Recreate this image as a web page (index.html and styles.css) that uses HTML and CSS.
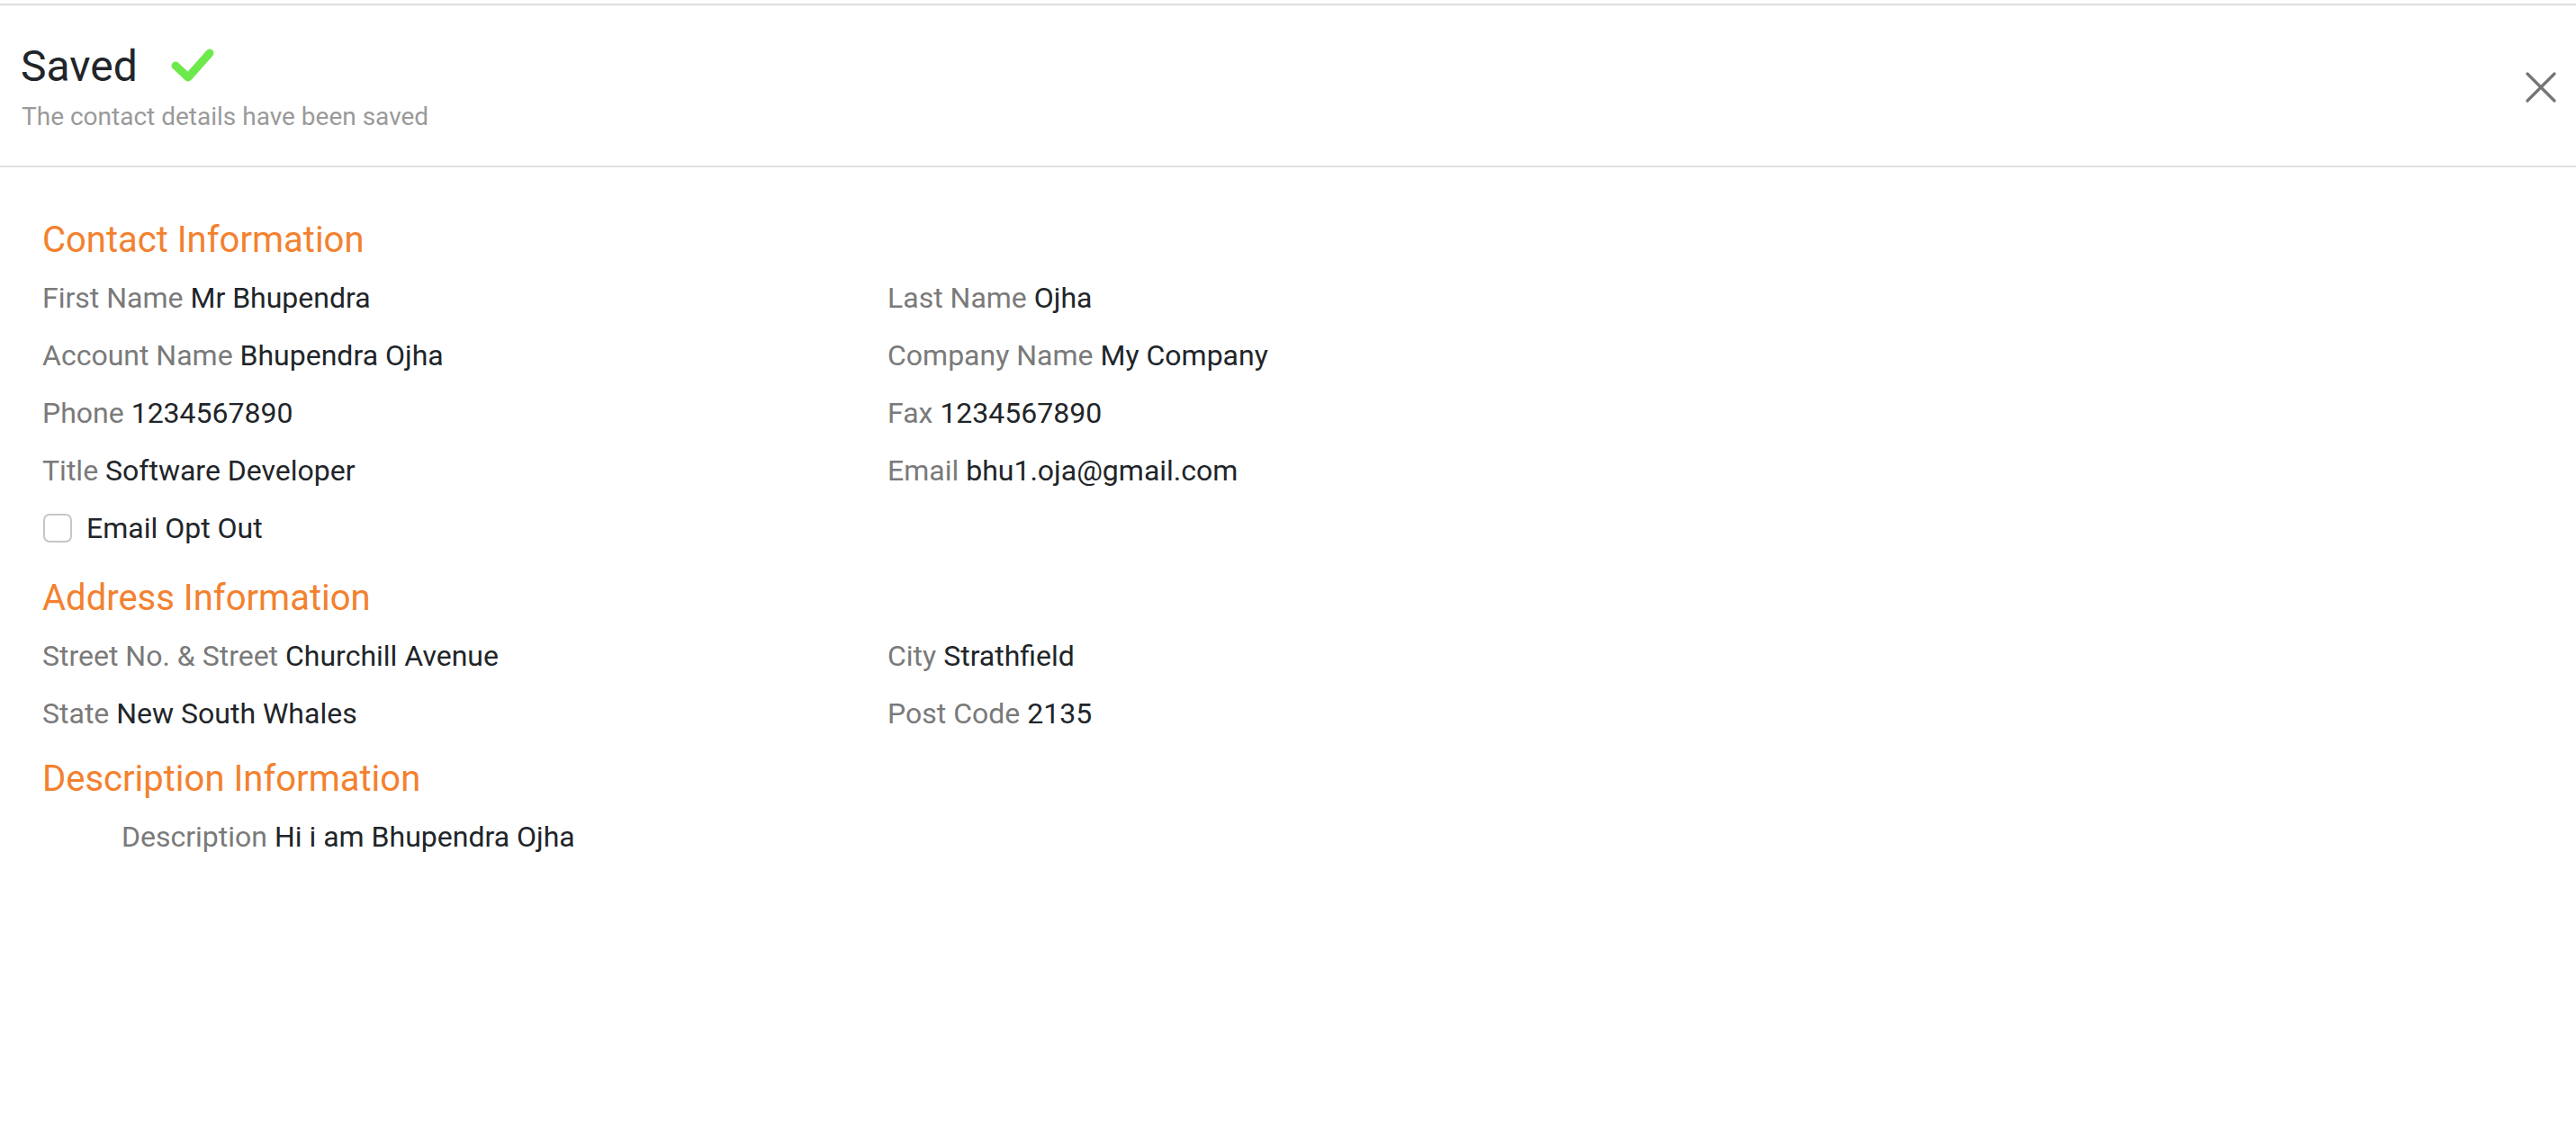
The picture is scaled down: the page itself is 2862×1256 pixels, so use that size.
FILE: index.html
```html
<!DOCTYPE html>
<html lang="en">
<head>
<meta charset="utf-8">
<title>Saved</title>
<link rel="stylesheet" href="styles.css">
</head>
<body>
<div class="page">
  <header class="modal-header">
    <div class="header-text">
      <div class="title-row">
        <h1 class="title">Saved</h1>
        <svg class="check" width="52" height="40" viewBox="0 0 52 40" aria-hidden="true">
          <path d="M7 20 L21 33 L45 6" fill="none" stroke="#6de94b" stroke-width="9" stroke-linecap="round" stroke-linejoin="round"/>
        </svg>
      </div>
      <p class="subtitle">The contact details have been saved</p>
    </div>
    <button class="close" type="button" aria-label="Close">
      <svg width="34" height="34" viewBox="0 0 34 34" aria-hidden="true">
        <path d="M2 2 L32 32 M32 2 L2 32" stroke="#757575" stroke-width="3.2" stroke-linecap="round"/>
      </svg>
    </button>
  </header>

  <main class="content">
    <section class="section">
      <h2 class="section-title">Contact Information</h2>
      <div class="fields">
        <div class="field"><span class="label">First Name</span> <span class="value">Mr Bhupendra</span></div>
        <div class="field"><span class="label">Last Name</span> <span class="value">Ojha</span></div>
        <div class="field"><span class="label">Account Name</span> <span class="value">Bhupendra Ojha</span></div>
        <div class="field"><span class="label">Company Name</span> <span class="value">My Company</span></div>
        <div class="field"><span class="label">Phone</span> <span class="value">1234567890</span></div>
        <div class="field"><span class="label">Fax</span> <span class="value">1234567890</span></div>
        <div class="field"><span class="label">Title</span> <span class="value">Software Developer</span></div>
        <div class="field"><span class="label">Email</span> <span class="value">bhu1.oja@gmail.com</span></div>
      </div>
      <label class="checkbox-row">
        <span class="checkbox"></span>
        <span class="value">Email Opt Out</span>
      </label>
    </section>

    <section class="section">
      <h2 class="section-title">Address Information</h2>
      <div class="fields">
        <div class="field"><span class="label">Street No. &amp; Street</span> <span class="value">Churchill Avenue</span></div>
        <div class="field"><span class="label">City</span> <span class="value">Strathfield</span></div>
        <div class="field"><span class="label">State</span> <span class="value">New South Whales</span></div>
        <div class="field"><span class="label">Post Code</span> <span class="value">2135</span></div>
      </div>
    </section>

    <section class="section">
      <h2 class="section-title">Description Information</h2>
      <div class="field description"><span class="label">Description</span> <span class="value">Hi i am Bhupendra Ojha</span></div>
    </section>
  </main>
</div>
</body>
</html>
```

FILE: styles.css
```css
* { box-sizing: border-box; }

html, body {
  margin: 0;
  padding: 0;
  background: #ffffff;
}

body {
  font-family: Roboto, "Liberation Sans", Arial, sans-serif;
  color: #212529;
}

.page {
  padding-top: 4px;
  width: 2862px;
}

.modal-header {
  display: flex;
  align-items: center;
  justify-content: space-between;
  border-top: 2px solid #dcdcdc;
  border-bottom: 2px solid #e0e2e5;
  padding: 40px 22px 36px 23px;
}

.title-row {
  display: flex;
  align-items: flex-start;
}

.title {
  margin: 0;
  font-size: 48px;
  line-height: 56px;
  font-weight: 400;
  color: #212529;
}

.check {
  display: block;
  margin-left: 35px;
  margin-top: 7px;
}

.subtitle {
  margin: 10px 0 0 1px;
  font-size: 28px;
  line-height: 36px;
  color: #9a9a9a;
}

.close {
  border: 0;
  background: none;
  padding: 0;
  margin: 0;
  width: 34px;
  height: 34px;
  display: flex;
  align-items: center;
  justify-content: center;
  cursor: pointer;
}

.close svg { display: block; }

.content {
  padding: 55px 47px 0 47px;
}

.section + .section {
  margin-top: 25px;
}

.section-title {
  margin: 2px 0 16px 0;
  font-size: 40px;
  line-height: 48px;
  font-weight: 400;
  color: #f3812f;
}

.fields {
  display: grid;
  grid-template-columns: 939px 1fr;
  row-gap: 16px;
}

.field {
  font-size: 32px;
  line-height: 48px;
  white-space: nowrap;
}

.label {
  color: #7a7a7a;
}

.value {
  color: #212529;
}

.checkbox-row {
  display: flex;
  align-items: center;
  gap: 16px;
  margin-top: 16px;
  padding-bottom: 5px;
  font-size: 32px;
  line-height: 48px;
}

.checkbox {
  display: block;
  width: 32px;
  height: 32px;
  margin-left: 1px;
  border: 2px solid #c6c6c6;
  border-radius: 7px;
  background: #fff;
}

.description {
  padding-left: 88px;
}
```
